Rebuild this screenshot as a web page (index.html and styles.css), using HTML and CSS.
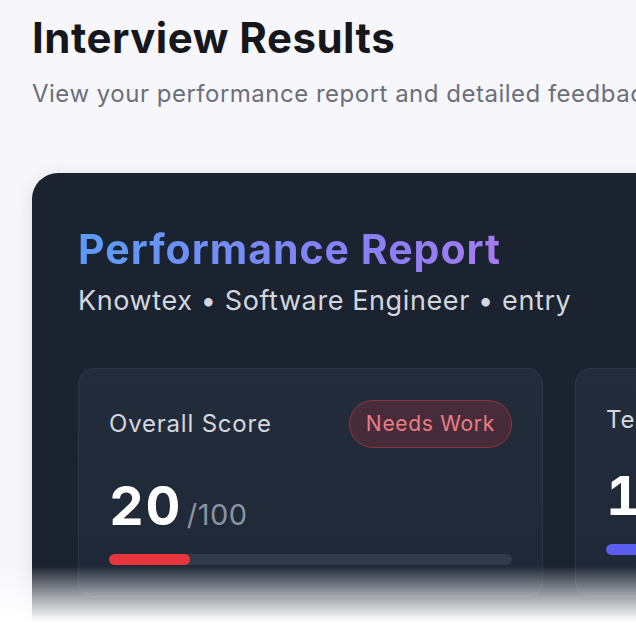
FILE: index.html
```html
<!DOCTYPE html>
<html lang="en">
<head>
<meta charset="utf-8">
<title>Interview Results</title>
<link rel="stylesheet" href="styles.css">
</head>
<body>
<main class="page">
  <header class="page-head">
    <h1 class="page-title">Interview Results</h1>
    <p class="page-sub">View your performance report and detailed feedback for your interview</p>
  </header>
  <section class="report">
    <h2 class="report-title">Performance Report</h2>
    <p class="report-meta">Knowtex • Software Engineer • entry</p>
    <div class="scores">
      <div class="score-card">
        <div class="score-head">
          <span class="score-label">Overall Score</span>
          <span class="badge">Needs Work</span>
        </div>
        <div class="score-value"><span class="num">20</span><span class="max">/100</span></div>
        <div class="bar"><div class="fill fill-red" style="width:20%"></div></div>
      </div>
      <div class="score-card">
        <div class="score-head score-head-plain">
          <span class="score-label">Technical Skills</span>
        </div>
        <div class="score-value"><span class="num">15</span><span class="max">/100</span></div>
        <div class="bar"><div class="fill fill-indigo" style="width:15%"></div></div>
      </div>
    </div>
  </section>
  <div class="fade"></div>
</main>
</body>
</html>
```
FILE: styles.css
```css
html, body {
  margin: 0;
  padding: 0;
}
body {
  background: #f7f7fb;
  font-family: Inter, "Noto Sans", sans-serif;
  width: 636px;
  height: 633px;
  overflow: hidden;
}
.page {
  position: relative;
  height: 633px;
  overflow: hidden;
  padding: 13px 0 0 32px;
  box-sizing: border-box;
}
.page-title {
  margin: 0;
  font-size: 42px;
  line-height: 50px;
  font-weight: 700;
  color: #15171c;
  letter-spacing: 0.5px;
  white-space: nowrap;
}
.page-sub {
  margin: 15px 0 0;
  font-size: 24px;
  line-height: 32px;
  color: #6b6f78;
  letter-spacing: 0.5px;
  white-space: nowrap;
}
.report {
  margin-top: 63px;
  width: 900px;
  background: #1b2230;
  border-radius: 26px;
  padding: 52px 46px 200px;
  box-shadow: 0 4px 18px rgba(20, 24, 40, 0.12);
}
.report-title {
  margin: 0;
  font-size: 41px;
  line-height: 48px;
  font-weight: 700;
  background: linear-gradient(90deg, #5b9cf6 0%, #8b7ef4 70%, #a47cf0 100%);
  -webkit-background-clip: text;
  background-clip: text;
  color: transparent;
  width: max-content;
  letter-spacing: 1px;
}
.report-meta {
  margin: 10px 0 0;
  font-size: 27px;
  line-height: 36px;
  color: #d3d7de;
  letter-spacing: 0.6px;
}
.scores {
  margin-top: 49px;
  display: grid;
  grid-template-columns: 465px 465px;
  gap: 32px;
}
.score-card {
  background: linear-gradient(180deg, #232c3b 0%, #1f2836 100%);
  border: 1px solid rgba(255, 255, 255, 0.06);
  border-radius: 16px;
  padding: 31px 30px 31px;
}
.score-head {
  display: flex;
  justify-content: space-between;
  align-items: center;
}
.score-head-plain {
  padding-top: 2px;
}
.score-label {
  font-size: 24px;
  line-height: 36px;
  color: #d3d7de;
  letter-spacing: 0.8px;
}
.badge {
  font-size: 21px;
  line-height: 28px;
  padding: 9px 16px;
  border-radius: 999px;
  color: #ee7d84;
  background: rgba(200, 50, 60, 0.22);
  border: 1.5px solid rgba(220, 60, 70, 0.45);
  letter-spacing: 0.7px;
}
.score-value {
  margin-top: 28px;
  display: flex;
  align-items: baseline;
  gap: 5px;
}
.num {
  font-size: 54px;
  line-height: 60px;
  font-weight: 700;
  color: #ffffff;
  letter-spacing: 1.5px;
  font-variant-numeric: tabular-nums;
}
.max {
  font-size: 29px;
  color: #8b93a1;
  letter-spacing: 0.5px;
}
.bar {
  margin-top: 18px;
  height: 11px;
  border-radius: 999px;
  background: #313b4b;
  overflow: hidden;
}
.fill {
  height: 100%;
  border-radius: 999px;
}
.fill-red { background: #e8363f; }
.fill-indigo { background: #5a5df0; }
.fade {
  position: absolute;
  left: 0;
  right: 0;
  top: 566px;
  bottom: 0;
  background: linear-gradient(180deg, rgba(255,255,255,0) 0%, rgba(255,255,255,0.55) 42%, rgba(255,255,255,0.95) 78%, #ffffff 86%, #ffffff 100%);
}
```
